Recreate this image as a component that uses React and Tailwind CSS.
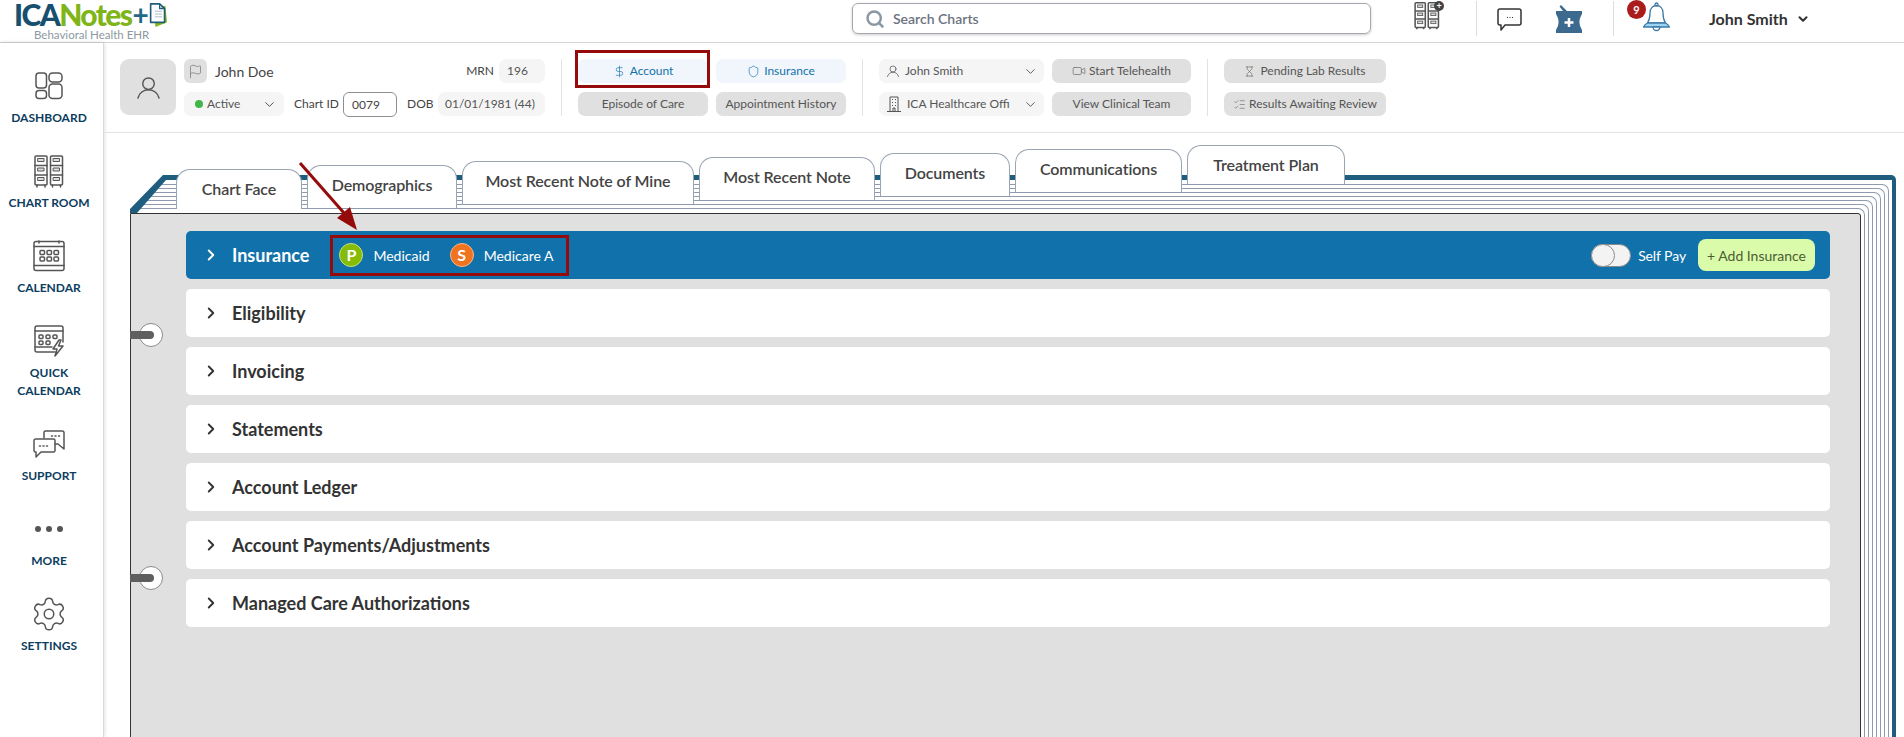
import React from "react";
import { Search, ChevronDown, ChevronRight, DollarSign, Shield, Video, Hourglass, ListChecks, Flag, Settings } from "lucide-react";

const S = { fill: "none", stroke: "#555", strokeWidth: 1.5, strokeLinejoin: "round", strokeLinecap: "round" };

const DashIcon = () => (
  <svg width="28" height="28" viewBox="0 0 28 28" {...S}>
    <rect x="1" y="1" width="10.5" height="15" rx="3" />
    <rect x="1" y="18.5" width="10.5" height="8" rx="3" />
    <rect x="14" y="1" width="13" height="9" rx="3.5" />
    <rect x="14" y="12" width="13" height="14.5" rx="3.5" />
  </svg>
);

const Cabinet = ({ x = 0 }) => (
  <g transform={`translate(${x} 0)`}>
    <rect x="1" y="1" width="12" height="29" rx="1" />
    <path d="M1 10.500h12M1 20h12M3 30v2M11 30v2" />
    <rect x="4" y="3.500" width="6" height="3" fill="#ddd" strokeWidth="1" />
    <rect x="4" y="13" width="6" height="3" fill="#ddd" strokeWidth="1" />
    <rect x="4" y="22.500" width="6" height="3" fill="#ddd" strokeWidth="1" />
  </g>
);

const CabinetsIcon = () => (
  <svg width="30" height="33" viewBox="0 0 30 33" {...S} strokeWidth="1.5">
    <Cabinet x={0} />
    <Cabinet x={15.500} />
  </svg>
);

const CalGrid = () => (
  <g>
    {[9, 16, 23].map((x) => [10.500, 17].map((y) => <rect key={x + "-" + y} x={x - 2} y={y} width="4.500" height="4" rx="1" />))}
  </g>
);

const CalendarIcon = () => (
  <svg width="32" height="32" viewBox="0 0 32 32" {...S}>
    <rect x="1" y="1.500" width="30" height="29" rx="2" />
    <path d="M1 6.500h30M1 25.500h30M6 1v2M26 1v2" />
    <CalGrid />
  </svg>
);

const QuickCalIcon = () => (
  <svg width="31" height="32" viewBox="0 0 31 32" {...S}>
    <path d="M21 27H3a2 2 0 0 1-2-2V3a2 2 0 0 1 2-2h24a2 2 0 0 1 2 2v14" />
    <path d="M1 6h28M1 22h17" />
    <rect x="5" y="10" width="4" height="3.500" rx="1" />
    <rect x="12" y="10" width="4" height="3.500" rx="1" />
    <rect x="19" y="10" width="4" height="3.500" rx="1" />
    <rect x="5" y="16" width="4" height="3.500" rx="1" />
    <rect x="12" y="16" width="4" height="3.500" rx="1" />
    <path d="M25 15l-6 9h4l-2 7 8-10h-4.500l2.500-6z" fill="#fff" />
  </svg>
);

const SupportIcon = () => (
  <svg width="32" height="29" viewBox="0 0 32 29" {...S}>
    <path d="M11 8V2.500A1.500 1.500 0 0 1 12.500 1h17A1.500 1.500 0 0 1 31 2.500V19l-6-5h-3" />
    <path d="M2.500 9h18A1.500 1.500 0 0 1 22 10.500v10a1.500 1.500 0 0 1-1.500 1.500H8l-5 5v-5h-.5A1.500 1.500 0 0 1 1 20.500v-10A1.500 1.500 0 0 1 2.500 9z" />
    <path d="M6.500 16h1M10 16h1M13.500 16h1M18.500 6h1M22 6h1M25.500 6h1" />
  </svg>
);

const DocLogo = () => (
  <svg width="18" height="25" viewBox="0 0 22 27" preserveAspectRatio="none">
    <path d="M5 9l15-5 2 18-14 5z" fill="#86b817" />
    <path d="M2 2h11l6 5v15H2z" fill="#fff" stroke="#1f5d78" strokeWidth="2" strokeLinejoin="round" />
    <path d="M13 2v5h6" fill="none" stroke="#1f5d78" strokeWidth="1.500" />
    <path d="M7 10h9M7 13h9M7 16h9" stroke="#9fb4bf" strokeWidth="1" />
  </svg>
);

const PersonIcon = ({ size = 24, color = "#555", w = 1.5 }) => (
  <svg width={size} height={size} viewBox="0 0 24 24" fill="none" stroke={color} strokeWidth={w} strokeLinecap="round">
    <circle cx="12" cy="8" r="6" />
    <path d="M1 23c1.500-5 5-8.500 11-8.500S21.500 18 23 23" />
  </svg>
);

const BuildingIcon = () => (
  <svg width="14" height="16" viewBox="0 0 14 16" fill="none" stroke="#555" strokeWidth="1">
    <path d="M3 15.500V1h8v14.500M0 15.500h14M5 3.500h1M8 3.500h1M5 6.500h1M8 6.500h1M5 9.500h1M8 9.500h1M6 15v-3h2v3" />
  </svg>
);

const ChatIcon = () => (
  <svg width="25" height="24" viewBox="0 0 25 24" fill="none" stroke="#333" strokeWidth="1.500" strokeLinejoin="round">
    <path d="M3 1h19a2 2 0 0 1 2 2v12a2 2 0 0 1-2 2H8l-4 5v-5H3a2 2 0 0 1-2-2V3a2 2 0 0 1 2-2z" />
    <path d="M10 9.500h1M12.500 9.500h1M15 9.500h1" strokeWidth="1" />
  </svg>
);

const MortarIcon = () => (
  <svg width="26" height="28" viewBox="0 0 26 28">
    <path d="M5 0l6 6h15v3q-3 5-2.500 9q0 3 2.500 7v3H0v-3q2.500-4 2.500-7q.5-4-2.500-9V6h7L3.500 1.500z" fill="#3c6a8e" />
    <path d="M13 13v9M8.500 17.500h9" stroke="#fff" strokeWidth="2.500" />
  </svg>
);

const BellIcon = () => (
  <svg width="29" height="30" viewBox="0 0 29 30" fill="none" stroke="#3f7aa5" strokeWidth="1.300" strokeLinejoin="round">
    <path d="M5.500 21c2-3 2.500-5 2.500-10 0-5 3-7.500 6.500-7.500S21 6 21 11c0 5 .5 7 2.500 10z" fill="#fff" />
    <path d="M1.500 25c1-2 2-3 4-4h18c2 1 3 2 4 4z" fill="#9bd4f5" />
    <circle cx="14.500" cy="2.500" r="1.500" />
    <path d="M11 25a3.500 3.500 0 0 0 7 0z" fill="#fff" />
  </svg>
);

const NavItem = ({ icon, children }) => (
  <div className="flex flex-col items-center mb-[27px]">
    <div className="h-[34px] flex items-center justify-center">{icon}</div>
    <div className="mt-[6px] text-center text-[12px] leading-[18px] font-bold text-[#0c3d5e] whitespace-nowrap">{children}</div>
  </div>
);

const Field = ({ className = "", children }) => (
  <div className={`h-[24px] rounded-[7px] flex items-center text-[12px] text-[#555] ${className}`}>{children}</div>
);

const tabs = [
  { t: "Chart Face", c: "w-[126px] mt-[24px] h-[40px] after:absolute after:top-full after:-left-px after:-right-px after:h-[4px] after:bg-white" },
  { t: "Demographics", c: "w-[150px] mt-[20px] h-[43px]" },
  { t: "Most Recent Note of Mine", c: "w-[232px] mt-[16px] h-[43px]" },
  { t: "Most Recent Note", c: "w-[176px] mt-[12px] h-[43px]" },
  { t: "Documents", c: "w-[130px] mt-[8px] h-[43px]" },
  { t: "Communications", c: "w-[167px] mt-[4px] h-[43px]" },
  { t: "Treatment Plan", c: "w-[158px] mt-0 h-[39px]" },
];

const rows = ["Eligibility", "Invoicing", "Statements", "Account Ledger", "Account Payments/Adjustments", "Managed Care Authorizations"];

const Ring = ({ top }) => (
  <div className={`absolute left-0 w-[34px] h-[24px] ${top}`}>
    <div className="absolute left-[9px] top-0 w-[24px] h-[24px] rounded-full bg-white border border-[#8a8a8a]" />
    <div className="absolute left-0 top-[8px] w-[24px] h-[8px] rounded-r-full bg-[#5f5f5f]" />
  </div>
);

const edge = "border-t border-r border-[#8e9bae] pt-[3px] pr-[3px] rounded-tr-[7px]";

const Pages = ({ children }) => (
  <div className={edge}><div className={edge}><div className={edge}><div className={edge}>
    <div className={edge}><div className={edge}><div className="border-t border-r border-[#8e9bae] pt-[4px] pr-[3px] rounded-tr-[7px]">
      {children}
    </div></div></div>
  </div></div></div></div>
);

export default function App() {
  return (
    <div className="h-[737px] overflow-hidden bg-white font-[Lato,sans-serif] text-[#444]">
      <header className="h-[43px] border-b border-[#d6d6d6] flex items-start">
        <div className="w-[852px] shrink-0 pl-[14px] pt-[3px]">
          <div className="flex items-center h-[23px]">
            <span className="text-[30px] leading-[23px] font-black tracking-[-1.6px] text-[#17506e]">ICA</span>
            <span className="text-[30px] leading-[23px] font-black tracking-[-1.6px] text-[#7fb519]">Notes</span>
            <span className="text-[28px] leading-[23px] font-bold text-[#1f6b85] ml-[1px]">+</span>
            <DocLogo />
          </div>
          <div className="ml-[20px] text-[11.5px] leading-[14px] mt-[2px] text-[#8c999f]">Behavioral Health EHR</div>
        </div>
        <div className="w-[519px] h-[31px] mt-[3px] rounded-[6px] border border-[#a3a8ae] shadow-[0_1px_3px_rgba(0,0,0,0.2)] flex items-center pl-[12px]">
          <Search size={20} strokeWidth={3} className="text-[#8b97a3]" />
          <span className="ml-[8px] text-[14px] font-semibold text-[#6b7280]">Search Charts</span>
        </div>
        <div className="ml-[43px] mt-[2px] relative">
          <svg width="26" height="28" viewBox="0 0 30 33" fill="none" stroke="#555" strokeWidth="1.800">
            <Cabinet x={0} />
            <Cabinet x={15.500} />
          </svg>
          <div className="absolute -top-[1px] -right-[4px] w-[10px] h-[10px] rounded-full bg-[#444] text-white text-[9px] leading-[10px] text-center font-bold">+</div>
        </div>
        <div className="ml-[36px] mt-[1px] w-px h-[35px] bg-[#ddd]" />
        <div className="ml-[20px] mt-[8px]"><ChatIcon /></div>
        <div className="ml-[34px] mt-[5px]"><MortarIcon /></div>
        <div className="ml-[31px] mt-[1px] w-px h-[35px] bg-[#ddd]" />
        <div className="ml-[28px] mt-[2px] relative">
          <BellIcon />
          <div className="absolute -left-[15px] -top-[2px] w-[19px] h-[19px] rounded-full bg-[#ab1c1c] text-white text-[11px] leading-[19px] text-center font-bold">9</div>
        </div>
        <div className="ml-[38px] mt-[9px] text-[16px] leading-[20px] font-bold text-[#333] flex items-center">
          John Smith
          <ChevronDown size={14} strokeWidth={3.5} className="ml-[8px]" />
        </div>
      </header>

      <div className="flex">
        <aside className="w-[104px] shrink-0 h-[694px] pt-[26px] pr-[5px] border-r border-[#d9d9d9] shadow-[0_0_4px_rgba(0,0,0,0.18)]">
          <NavItem icon={<DashIcon />}>DASHBOARD</NavItem>
          <NavItem icon={<CabinetsIcon />}>CHART ROOM</NavItem>
          <NavItem icon={<CalendarIcon />}>CALENDAR</NavItem>
          <NavItem icon={<QuickCalIcon />}>QUICK<br />CALENDAR</NavItem>
          <NavItem icon={<SupportIcon />}>SUPPORT</NavItem>
          <NavItem icon={<svg width="28" height="6" viewBox="0 0 28 6" fill="#555"><circle cx="3" cy="3" r="3" /><circle cx="14" cy="3" r="3" /><circle cx="25" cy="3" r="3" /></svg>}>MORE</NavItem>
          <NavItem icon={<Settings size={38} strokeWidth={0.95} className="text-[#555]" />}>SETTINGS</NavItem>
        </aside>

        <main className="flex-1 min-w-0">
          <section className="h-[90px] border-b border-[#e2e2e2] pt-[16px] pl-[16px] flex items-start">
            <div className="w-[56px] h-[56px] rounded-[9px] bg-[#e0e0e0] flex items-center justify-center">
              <PersonIcon size={23} />
            </div>
            <div className="ml-[8px] w-[361px] flex flex-col gap-[9px]">
              <div className="flex items-center h-[24px]">
                <div className="w-[23px] h-[24px] rounded-[6px] bg-[#e0e0e0] flex items-center justify-center">
                  <Flag size={15} strokeWidth={1} className="text-[#666]" />
                </div>
                <span className="ml-[8px] text-[14px] text-[#444]">John Doe</span>
                <span className="ml-auto text-[12px] text-[#444]">MRN</span>
                <Field className="ml-[5px] w-[46px] pl-[8px] bg-[#f5f5f5]">196</Field>
              </div>
              <div className="flex items-center h-[24px]">
                <Field className="w-[100px] shrink-0 pl-[11px] bg-[#f5f5f5]">
                  <span className="w-[8px] h-[8px] rounded-full bg-[#43b649] mr-[4px]" />Active
                  <ChevronDown size={15} strokeWidth={1.500} className="ml-auto mr-[7px] text-[#444]" />
                </Field>
                <span className="ml-[10px] w-[45px] shrink-0 whitespace-nowrap text-[12px] text-[#444]">Chart ID</span>
                <div className="ml-[4px] w-[54px] shrink-0 h-[25px] rounded-[6px] border border-[#8f8f8f] text-[12px] pl-[8px] leading-[23px]">0079</div>
                <span className="ml-[10px] text-[12px] text-[#444]">DOB</span>
                <Field className="ml-auto w-[107px] shrink-0 pl-[7px] bg-[#f5f5f5] whitespace-nowrap">01/01/1981 (44)</Field>
              </div>
            </div>

            <div className="ml-[16px] w-px h-[57px] bg-[#e2e2e2]" />

            <div className="ml-[16px] grid grid-cols-[130px_130px] gap-x-[8px] gap-y-[9px] text-[12px]">
              <div className="relative">
                <Field className="justify-center bg-[#f0f6fb] text-[#1372ab]">
                  <DollarSign size={13} strokeWidth={1.200} className="mr-[4px]" />Account
                </Field>
                <div className="absolute -left-[3px] -right-[2px] -top-[9px] -bottom-[5px] border-[3px] border-[#950a0a]" />
              </div>
              <Field className="justify-center bg-[#f0f6fb] text-[#1372ab]">
                <Shield size={13} strokeWidth={1.200} className="mr-[4px]" />Insurance
              </Field>
              <Field className="justify-center bg-[#e0e0e0]">Episode of Care</Field>
              <Field className="justify-center bg-[#e0e0e0]">Appointment History</Field>
            </div>

            <div className="ml-[16px] w-px h-[57px] bg-[#e2e2e2]" />

            <div className="ml-[16px] grid grid-cols-[165px_139px] gap-x-[8px] gap-y-[9px]">
              <Field className="pl-[8px] bg-[#f5f5f5]">
                <PersonIcon size={12} w={1.500} /><span className="ml-[6px]">John Smith</span>
                <ChevronDown size={15} strokeWidth={1.500} className="ml-auto mr-[6px]" />
              </Field>
              <Field className="justify-center bg-[#e0e0e0]">
                <Video size={14} strokeWidth={1} className="mr-[3px]" />Start Telehealth
              </Field>
              <Field className="pl-[8px] bg-[#f5f5f5]">
                <BuildingIcon /><span className="ml-[6px] w-[103px] overflow-hidden whitespace-nowrap">ICA Healthcare Office</span>
                <ChevronDown size={15} strokeWidth={1.500} className="ml-auto mr-[6px]" />
              </Field>
              <Field className="justify-center bg-[#e0e0e0]">View Clinical Team</Field>
            </div>

            <div className="ml-[16px] w-px h-[57px] bg-[#e2e2e2]" />

            <div className="ml-[16px] w-[162px] flex flex-col gap-[9px]">
              <Field className="justify-center bg-[#e0e0e0]">
                <Hourglass size={11} strokeWidth={1.200} className="mr-[5px]" />Pending Lab Results
              </Field>
              <Field className="justify-center bg-[#e0e0e0]">
                <ListChecks size={13} strokeWidth={1} className="mr-[3px]" />Results Awaiting Review
              </Field>
            </div>
          </section>

          <div className="pl-[26px] pr-[8px] pt-[42px]">
            <div className="relative border-t-[5px] border-r-[4px] border-[#1f5d7e] rounded-tr-[5px] pt-[4px] pr-[3px]">
              <Pages>
                <div className="border border-[#333] rounded-tr-[3px] bg-[#e0e0e0] min-h-[560px] pt-[17px] pl-[55px] pr-[30px]">
                  <div className="flex flex-col gap-[10px]">
                    <div className="h-[48px] rounded-[5px] bg-[#1172ab] text-white flex items-center pl-[16px] pr-[15px]">
                      <ChevronRight size={18} strokeWidth={2.500} />
                      <span className="ml-[12px] text-[18px] font-bold">Insurance</span>
                      <div className="ml-[21px] h-[41px] border-[3px] border-[#950a0a] flex items-center pl-[6px] w-[239px] text-[14px]">
                        <span className="w-[24px] h-[24px] rounded-full bg-[#86bc06] border border-[#c6de84] flex items-center justify-center font-bold text-[16px]">P</span>
                        <span className="ml-[10px]">Medicaid</span>
                        <span className="ml-[20px] w-[24px] h-[24px] rounded-full bg-[#f07420] border border-[#f7b78d] flex items-center justify-center font-bold text-[16px]">S</span>
                        <span className="ml-[10px]">Medicare A</span>
                      </div>
                      <div className="ml-auto flex items-center">
                        <div className="w-[40px] h-[23px] rounded-full bg-[#f3f3f3] border border-[#8a8a8a] relative">
                          <div className="absolute -left-px -top-px w-[24px] h-[23px] rounded-full bg-[#f3f3f3] border border-[#8a8a8a]" />
                        </div>
                        <span className="ml-[7px] text-[14px] tracking-[-0.1px]">Self Pay</span>
                        <div className="ml-[12px] w-[117px] h-[32px] rounded-[8px] bg-[#d9fbaa] text-[#4d5b33] text-[14px] flex items-center justify-center">+ Add Insurance</div>
                      </div>
                    </div>
                    {rows.map((r) => (
                      <div key={r} className="h-[48px] rounded-[5px] bg-white flex items-center pl-[16px] text-[#333]">
                        <ChevronRight size={18} strokeWidth={2.500} />
                        <span className="ml-[12px] text-[18px] font-bold">{r}</span>
                      </div>
                    ))}
                  </div>
                </div>
              </Pages>

              <svg className="absolute left-0 -top-[5px]" width="47" height="38" viewBox="0 0 47 38">
                <path d="M0 0h35L0 36z" fill="#fff" />
                <path d="M0 34L33 0h13v5H36L7 38H0z" fill="#1f5d7e" />
              </svg>

              <div className="absolute left-[46px] -top-[35px] flex items-start gap-[5px]">
                {tabs.map((t) => (
                  <div key={t.t} className={`relative bg-white border-t border-l border-r border-[#9aa5b3] rounded-t-[14px] pt-[7px] text-center text-[16px] leading-[24px] font-semibold tracking-[-0.1px] text-[#444] ${t.c}`}>
                    {t.t}
                  </div>
                ))}
              </div>

              <Ring top="top-[143px]" />
              <Ring top="top-[386px]" />

              <svg className="absolute left-[165px] -top-[22px]" width="70" height="77" viewBox="0 0 70 77" fill="#950a0a">
                <path d="M5 5L49 55" stroke="#950a0a" strokeWidth="3" fill="none" />
                <path d="M62 72L42 60L55 49z" />
              </svg>
            </div>
          </div>
        </main>
      </div>
    </div>
  );
}
